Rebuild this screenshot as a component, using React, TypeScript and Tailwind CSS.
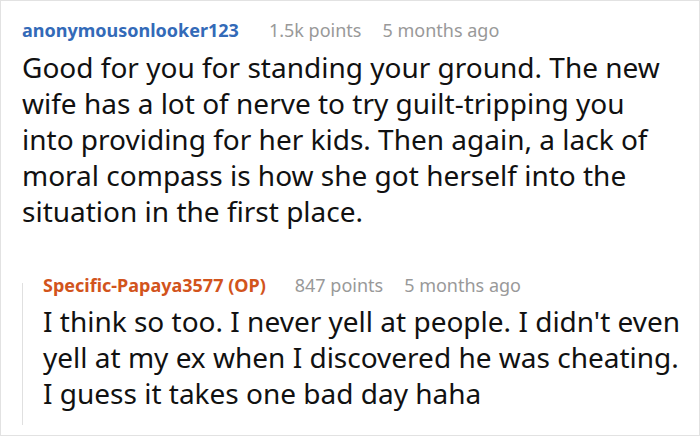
export default function App() {
  return (
    <div
      className="w-[700px] h-[436px] border border-[#e2e2e2] bg-white overflow-hidden"
      style={{ fontFamily: '"Noto Sans", sans-serif' }}
    >
      <div className="pl-[21px] pt-[17px] pr-[24px]">
        <div className="flex items-baseline text-[18px] leading-[24px]">
          <span className="font-bold text-[#336ab8]">anonymousonlooker123</span>
          <span className="ml-[30px] text-[#999999]">1.5k points</span>
          <span className="ml-[21px] text-[#999999]">5 months ago</span>
        </div>
        <p className="text-[28px]/[36px] text-[#111111] mt-[7px]">
          Good for you for standing your ground. The new wife has a lot of nerve to try guilt-tripping you into providing for her kids. Then again, a lack of moral compass is how she got herself into the situation in the first place.
        </p>
        <div className="mt-[44px] -mr-[10px] flex">
          <div className="w-px bg-[#e0e0e0] shrink-0 mt-[10px]" />
          <div className="pl-[20px] pb-[14px]">
            <div className="flex items-baseline text-[18px] leading-[24px]">
              <span className="font-bold text-[#d2541c]">Specific-Papaya3577 (OP)</span>
              <span className="ml-[29px] text-[#999999]">847 points</span>
              <span className="ml-[21px] text-[#999999]">5 months ago</span>
            </div>
            <p className="text-[28px]/[36px] text-[#111111] mt-[6px]">
              I think so too. I never yell at people. I didn't even yell at my ex when I discovered he was cheating. I guess it takes one bad day haha
            </p>
          </div>
        </div>
      </div>
    </div>
  );
}
